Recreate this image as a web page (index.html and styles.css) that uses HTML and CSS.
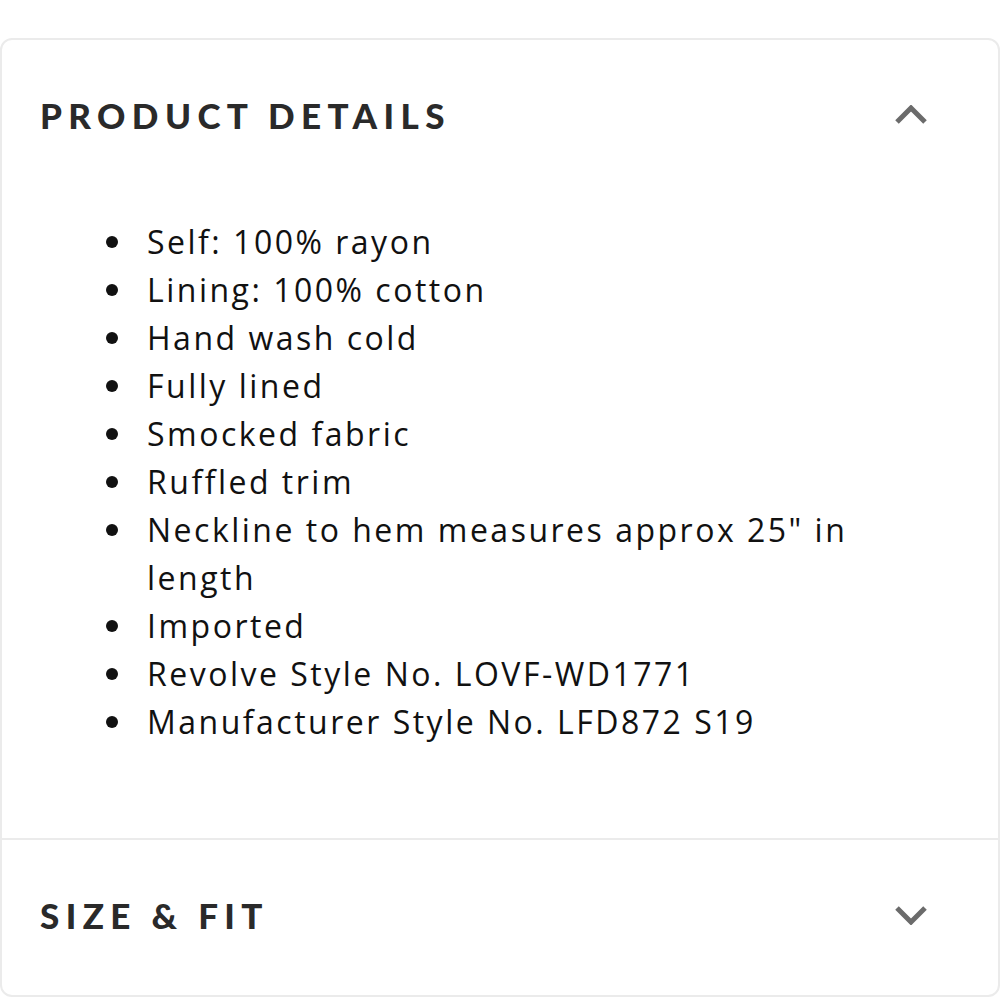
FILE: index.html
```html
<!DOCTYPE html>
<html>
<head>
<meta charset="utf-8">
<link rel="stylesheet" href="styles.css">
</head>
<body>
<div class="card">
  <section class="panel">
    <div class="panel-head">
      <h2 class="panel-title">PRODUCT DETAILS</h2>
      <svg class="chev" width="34" height="20" viewBox="0 0 34 20"><polyline points="3,17 17,3 31,17" fill="none" stroke="#6b6b6b" stroke-width="5"/></svg>
    </div>
    <ul class="details">
      <li>Self: 100% rayon</li>
      <li>Lining: 100% cotton</li>
      <li>Hand wash cold</li>
      <li>Fully lined</li>
      <li>Smocked fabric</li>
      <li>Ruffled trim</li>
      <li>Neckline to hem measures approx 25" in length</li>
      <li>Imported</li>
      <li>Revolve Style No. LOVF-WD1771</li>
      <li>Manufacturer Style No. LFD872 S19</li>
    </ul>
  </section>
  <section class="panel closed">
    <div class="panel-head">
      <h2 class="panel-title">SIZE &amp; FIT</h2>
      <svg class="chev" width="34" height="20" viewBox="0 0 34 20"><polyline points="3,3 17,17 31,3" fill="none" stroke="#6b6b6b" stroke-width="5"/></svg>
    </div>
  </section>
</div>
</body>
</html>
```
FILE: styles.css
```css
html, body { margin: 0; padding: 0; background: #fff; }
body { font-family: "Lato", "Liberation Sans", sans-serif; color: #1a1a1a; }
.card {
  margin-top: 38px;
  border: 2px solid #ebebeb;
  border-radius: 12px;
  overflow: hidden;
}
.panel + .panel { border-top: 2px solid #ebebeb; }
.panel-head {
  height: 152px;
  display: flex;
  align-items: center;
  justify-content: space-between;
  padding: 0 70px 2px 38px;
  box-sizing: border-box;
}
.closed .panel-head { height: 155px; padding-bottom: 6px; }
.panel-title {
  margin: 0;
  font-family: "Lato", sans-serif;
  font-weight: 900;
  font-size: 35px;
  letter-spacing: 6.4px;
  color: #2a2a2a;
}
.chev { display: block; }
.details {
  margin: 0;
  padding: 26px 100px 92px 104px;
  list-style: none;
  font-family: "Open Sans", sans-serif;
  font-size: 32px;
  line-height: 48px;
  letter-spacing: 2.5px;
  color: #111;
}
.details li {
  display: flex;
  align-items: flex-start;
}
.details li::before {
  content: "";
  flex: none;
  width: 12px;
  height: 12px;
  margin-top: 18px;
  margin-right: 29px;
  border-radius: 50%;
  background: #111;
}
```
